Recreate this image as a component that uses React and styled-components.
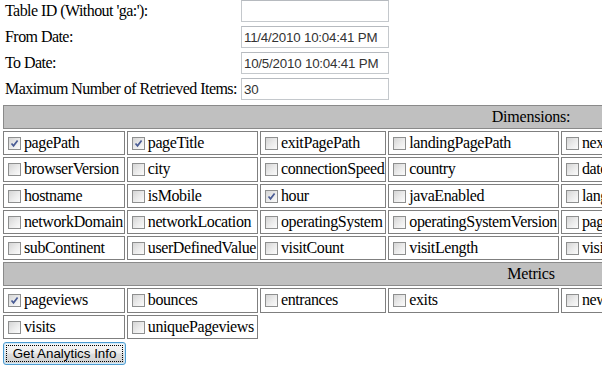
import React from 'react';
import styled, { createGlobalStyle } from 'styled-components';

const serif = '"Liberation Serif", "Times New Roman", Times, serif';

const GlobalStyle = createGlobalStyle`
  html, body {
    margin: 0;
    padding: 0;
    background: #fff;
    overflow: hidden;
  }
  body {
    font-family: ${serif};
    font-size: 16px;
    color: #000;
  }
`;

const Page = styled.div`
  padding: 0 0 0 1px;
  width: 1200px;
  font-family: ${serif};
`;

const FormTable = styled.table`
  border-spacing: 2px;
  margin: -3px 0 0 1px;
  font-family: ${serif};
  font-size: 16px;

  td {
    padding: 1px;
    vertical-align: middle;
    white-space: nowrap;
  }
`;

const Label = styled.td`
  letter-spacing: -0.55px;
`;

const TextInput = styled.input`
  display: block;
  box-sizing: border-box;
  width: 148px;
  height: 22px;
  margin: 0;
  padding: 1px 2px;
  border: 1px solid #c4c8cc;
  border-top-color: #b6babf;
  font-family: "Liberation Sans", Arial, sans-serif;
  font-size: 13.33px;
  letter-spacing: -0.2px;
  color: #333;
  background: #fff;
  outline: none;
`;

const GridTable = styled.table`
  width: 1060px;
  border-spacing: 2px;
  border-collapse: separate;
  margin: 0;
  font-family: ${serif};
  font-size: 16px;
`;

const Cell = styled.td`
  border: 1px solid #7f7f7f;
  padding: 1px;
  height: 20.2px;
  white-space: nowrap;
  vertical-align: middle;
  line-height: 18px;
  letter-spacing: -0.4px;
  font-family: ${serif};
  width: ${({ $fill }) => ($fill ? '100%' : 'auto')};
`;

const HeadCell = styled(Cell)`
  background: #c0c0c0;
  text-align: center;
  border-color: #8a8a8a;
  letter-spacing: -0.2px;
`;

const Box = styled.span`
  display: inline-block;
  box-sizing: border-box;
  width: 13px;
  height: 13px;
  margin: 0 3px 0 3px;
  vertical-align: -2px;
  border: 1px solid #8e8f8f;
  background: linear-gradient(135deg, #d5d5d5 0%, #ececec 55%, #fbfbfb 100%);
  position: relative;

  svg {
    position: absolute;
    left: 1px;
    top: 1px;
  }
`;

const Button = styled.button`
  box-sizing: border-box;
  width: 123px;
  height: 23px;
  margin: 1px 0 0 2px;
  padding: 2px;
  border: 1px solid #4d9bd0;
  border-radius: 3px;
  background: linear-gradient(#f6f6f6 0%, #ececec 48%, #dddddd 52%, #cfcfcf 100%);
  box-shadow: inset 0 0 0 1px #cfeafb;
  font-family: "Liberation Sans", Arial, sans-serif;
  font-size: 13.33px;
  color: #000;
  cursor: default;
`;

const Focus = styled.span`
  display: block;
  height: 15px;
  line-height: 15px;
  border: 1px dotted #000;
`;

const Check = ({ checked }) => (
  <Box>
    {checked && (
      <svg width="9" height="9" viewBox="0 0 9 9">
        <path d="M1.5 4.5 L3.5 6.8 L7.6 1.4" fill="none" stroke="#4a5c95" strokeWidth="1.7" />
      </svg>
    )}
  </Box>
);

const dimensions = [
  [['pagePath', true], ['pageTitle', true], ['exitPagePath'], ['landingPagePath'], ['nextPagePath'], ['previousPagePath'], ['secondPagePath']],
  [['browserVersion'], ['city'], ['connectionSpeed'], ['country'], ['date'], ['day'], ['daysSinceLastVisit']],
  [['hostname'], ['isMobile'], ['hour', true], ['javaEnabled'], ['language'], ['latitude'], ['longitude']],
  [['networkDomain'], ['networkLocation'], ['operatingSystem'], ['operatingSystemVersion'], ['pageDepth'], ['region'], ['screenResolution']],
  [['subContinent'], ['userDefinedValue'], ['visitCount'], ['visitLength'], ['visitorType'], ['week'], ['year']],
];

const metrics = [
  [['pageviews', true], ['bounces'], ['entrances'], ['exits'], ['newVisits'], ['timeOnPage'], ['timeOnSite']],
  [['visits'], ['uniquePageviews']],
];

const COLS = 7;

const OptionRow = ({ items }) => (
  <tr>
    {items.map(([name, checked], i) => (
      <Cell key={name} $fill={i === COLS - 1}>
        <Check checked={checked} />
        {name}
      </Cell>
    ))}
  </tr>
);

const fields = [
  ["Table ID (Without 'ga:'):", ''],
  ['From Date:', '11/4/2010 10:04:41 PM'],
  ['To Date:', '10/5/2010 10:04:41 PM'],
  ['Maximum Number of Retrieved Items:', '30'],
];

const App = () => (
  <Page>
    <GlobalStyle />
    <FormTable>
      <tbody>
        {fields.map(([label, value]) => (
          <tr key={label}>
            <Label>{label}</Label>
            <td>
              <TextInput defaultValue={value} />
            </td>
          </tr>
        ))}
      </tbody>
    </FormTable>
    <GridTable>
      <tbody>
        <tr>
          <HeadCell colSpan={COLS}>Dimensions:</HeadCell>
        </tr>
        {dimensions.map((row, i) => (
          <OptionRow key={i} items={row} />
        ))}
        <tr>
          <HeadCell colSpan={COLS}>Metrics</HeadCell>
        </tr>
        {metrics.map((row, i) => (
          <OptionRow key={i} items={row} />
        ))}
      </tbody>
    </GridTable>
    <Button>
      <Focus>Get Analytics Info</Focus>
    </Button>
  </Page>
);

export default App;
